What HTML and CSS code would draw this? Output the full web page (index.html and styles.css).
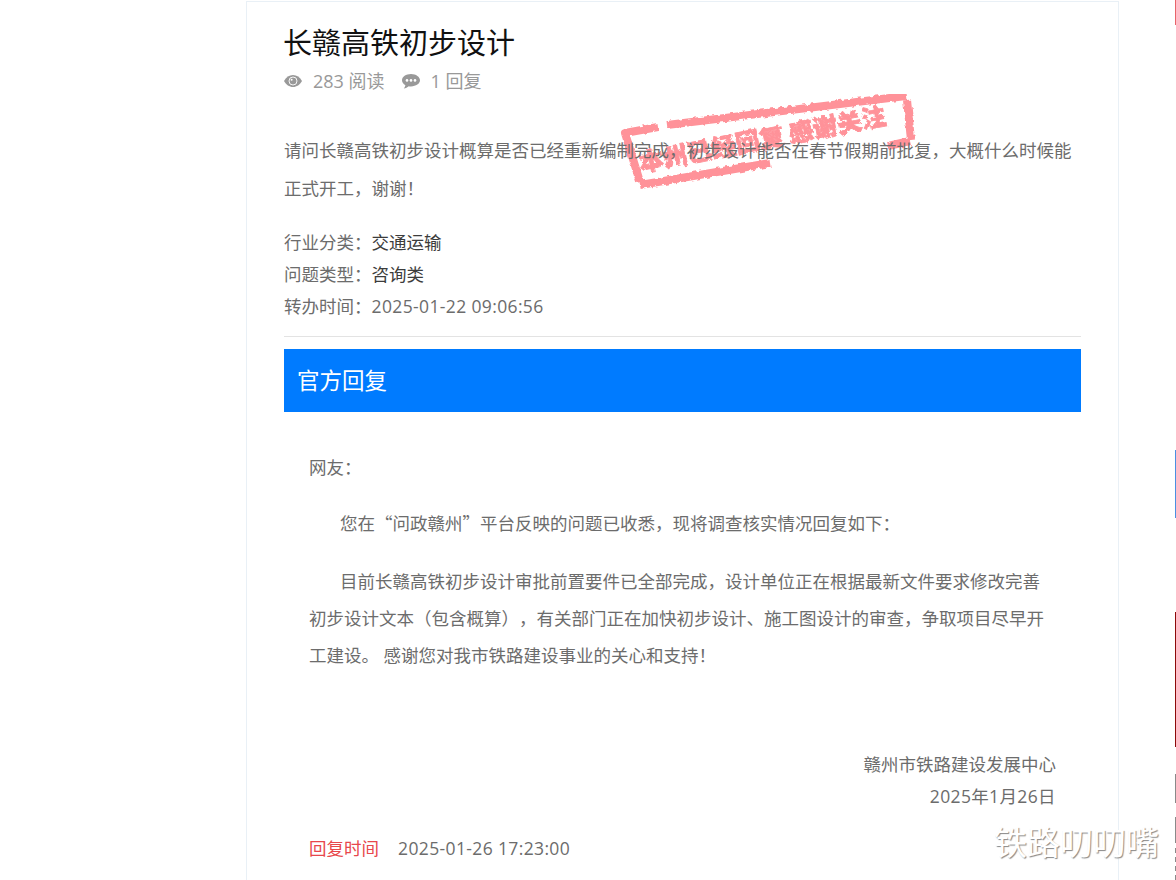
FILE: index.html
```html
<!DOCTYPE html>
<html lang="zh-CN">
<head>
<meta charset="utf-8">
<title>长赣高铁初步设计</title>
<link rel="stylesheet" href="styles.css">
</head>
<body>
<main class="card">
  <h1 class="title">长赣高铁初步设计</h1>
  <div class="meta">
    <span class="meta-item">
      <svg class="icon-eye" viewBox="0 0 18 12" aria-hidden="true">
        <path class="icon-fill" d="M0 6C2 2.300 5.300 0 9 0s7 2.300 9 6c-2 3.700-5.300 6-9 6S2 9.700 0 6z"/>
        <circle class="icon-ring" cx="9" cy="6" r="4"/>
        <circle class="icon-dot" cx="7.600" cy="4.700" r="1"/>
      </svg>
      283 阅读
    </span>
    <span class="meta-item">
      <svg class="icon-comment" viewBox="0 0 18 15" aria-hidden="true">
        <path class="icon-fill" d="M9 0C4 0 0 2.800 0 6.300c0 2 1.300 3.800 3.400 4.900-.2 1.200-.8 2.300-1.600 3.200 1.900-.2 3.600-1 4.900-2.200.7.100 1.500.2 2.300.2 5 0 9-2.800 9-6.100S14 0 9 0z"/>
        <circle class="icon-dot" cx="5" cy="6.400" r="1.300"/>
        <circle class="icon-dot" cx="9" cy="6.400" r="1.300"/>
        <circle class="icon-dot" cx="13" cy="6.400" r="1.300"/>
      </svg>
      1 回复
    </span>
  </div>

  <svg class="stamp" viewBox="0 0 296 100" aria-hidden="true">
    <defs>
      <filter id="rough" x="-5%" y="-15%" width="110%" height="130%">
        <feTurbulence type="fractalNoise" baseFrequency="0.22" numOctaves="2" seed="4"/>
        <feDisplacementMap in="SourceGraphic" scale="4"/>
        <feGaussianBlur stdDeviation="0.4"/>
      </filter>
    </defs>
    <g filter="url(#rough)">
      <path class="stamp-frame" d="M20 88 5 39 38 33"/>
      <path class="stamp-frame" d="M47 31 286 2"/>
      <path class="stamp-frame" d="M287 6 291 46"/>
      <path class="stamp-frame" d="M20 91 150 69"/>
      <path class="stamp-frame" d="M268 52 290 47"/>
      <text class="stamp-text" transform="translate(21 78) rotate(-11)">本州已经回复 感谢关注</text>
    </g>
  </svg>

  <p class="question">请问长赣高铁初步设计概算是否已经重新编制完成，初步设计能否在春节假期前批复，大概什么时候能正式开工，谢谢！</p>

  <dl class="facts">
    <div class="fact"><dt>行业分类：</dt><dd class="fact-dark">交通运输</dd></div>
    <div class="fact"><dt>问题类型：</dt><dd class="fact-dark">咨询类</dd></div>
    <div class="fact"><dt>转办时间：</dt><dd class="num">2025-01-22 09:06:56</dd></div>
  </dl>

  <h2 class="reply-head">官方回复</h2>

  <section class="reply">
    <p class="reply-line">网友：</p>
    <p class="reply-line indent">您在<span class="cjk">“</span>问政赣州<span class="cjk">”</span>平台反映的问题已收悉，现将调查核实情况回复如下：</p>
    <p class="reply-body indent">目前长赣高铁初步设计审批前置要件已全部完成，设计单位正在根据最新文件要求修改完善初步设计文本（包含概算），有关部门正在加快初步设计、施工图设计的审查，争取项目尽早开工建设。 感谢您对我市铁路建设事业的关心和支持！</p>
    <div class="sign">
      <div>赣州市铁路建设发展中心</div>
      <div class="num">2025年1月26日</div>
    </div>
    <div class="reply-time"><span class="reply-label">回复时间</span><span class="num">2025-01-26 17:23:00</span></div>
  </section>
</main>

<div class="watermark">铁路叨叨嘴</div>

<div class="edge edge-red"></div>
<div class="edge edge-blue"></div>
<div class="edge edge-dark"></div>
<div class="edge edge-grey1"></div>
<div class="edge edge-grey2"></div>
<div class="edge edge-grey3"></div>
</body>
</html>
```

FILE: styles.css
```css
* { box-sizing: border-box; }

html, body {
  margin: 0;
  height: 880px;
  overflow: hidden;
  background: #fff;
}

body {
  position: relative;
  font-family: "Open Sans", "Noto Sans CJK SC", sans-serif;
  font-size: 17.5px;
  color: #6c6c6c;
  text-spacing-trim: space-all;
}

.cjk { font-family: "Noto Sans CJK SC", sans-serif; }
.num { letter-spacing: 0.37px; }

.card {
  position: relative;
  width: 873px;
  height: 880px;
  margin: 1px 0 0 246px;
  padding: 0 37px;
  border: 1px solid #e9f0f6;
  border-bottom: 0;
}

.title {
  margin: 0 0 0 -1px;
  padding-top: 18px;
  font-size: 29px;
  line-height: 46px;
  font-weight: 400;
  color: #111;
}

.meta {
  display: flex;
  gap: 17px;
  height: 28px;
  margin-top: 1px;
  font-size: 18px;
  line-height: 28px;
  color: #999;
}

.meta-item {
  display: flex;
  align-items: center;
  gap: 11px;
}

.icon-eye { width: 18px; height: 12px; }
.icon-comment { width: 18px; height: 15px; }
.icon-fill { fill: #999; }
.icon-ring { fill: #999; stroke: #fff; stroke-width: 0.9; }
.icon-dot { fill: #fff; }

.stamp {
  position: absolute;
  left: 373px;
  top: 92px;
  width: 296px;
  height: 100px;
}

.stamp-frame {
  fill: none;
  stroke: #ff9299;
  stroke-width: 8;
  stroke-linejoin: round;
}

.stamp-text {
  font-family: "Noto Sans CJK SC", sans-serif;
  font-size: 24.500px;
  font-weight: 900;
  fill: #ff9299;
  stroke: #ff9299;
  stroke-width: 0.8;
}

.question {
  position: relative;
  margin: 36px 0 0;
  line-height: 38px;
}

.facts {
  margin: 19px 0 0;
  padding-bottom: 14px;
  border-bottom: 1px solid #e3e3e3;
}

.fact {
  display: flex;
  height: 32px;
  line-height: 32px;
}

.fact dd { margin: 0; }
.fact-dark { color: #3c3c3c; }

.reply-head {
  margin: 12px 0 0;
  height: 63px;
  padding-left: 13px;
  background: #007bff;
  color: #fff;
  font-size: 22.500px;
  line-height: 63px;
  font-weight: 400;
}

.reply {
  padding: 0 25px;
}

.reply p { margin: 0; }

.reply-line {
  line-height: 56px;
}

.reply > .reply-line:first-child {
  margin-top: 27px;
}

.indent { text-indent: 31px; }

.reply > .reply-body {
  line-height: 37px;
  margin-top: 12px;
}

.sign {
  margin-top: 74px;
  text-align: right;
  line-height: 32px;
}

.reply-time {
  display: flex;
  gap: 19px;
  margin-top: 20px;
  line-height: 32px;
}

.reply-label { color: #e8474c; }

.watermark {
  position: absolute;
  left: 994px;
  top: 821px;
  font-size: 33px;
  line-height: 44px;
  color: #fff;
  text-shadow: 1px 1px 1px #888;
}

.edge {
  position: absolute;
  left: 1175px;
  width: 1px;
}

.edge-red { top: 0; height: 25px; background: #e8646a; }
.edge-blue { top: 450px; height: 68px; background: #4a90e2; }
.edge-dark { top: 612px; height: 135px; background: #8c0a0a; }
.edge-grey1 { top: 774px; height: 29px; background: #8a8a8a; }
.edge-grey2 { top: 817px; height: 26px; background: #8a8a8a; }
.edge-grey3 { top: 848px; height: 32px; background: repeating-linear-gradient(#8a8a8a 0 5px, #fff 5px 9px); }
```
